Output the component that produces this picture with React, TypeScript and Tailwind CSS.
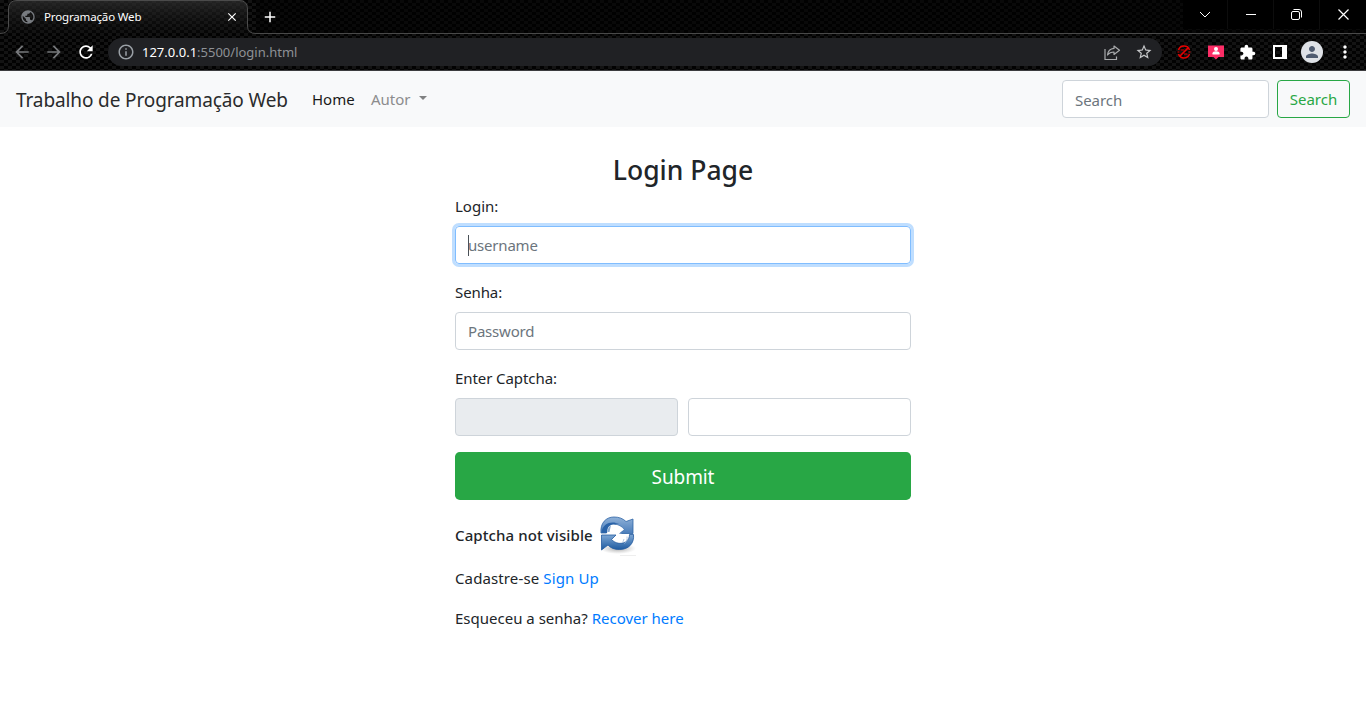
import React from "react";
import {
  MdArrowBack, MdArrowForward, MdRefresh, MdInfoOutline, MdClose, MdAdd,
  MdExtension, MdStarBorder, MdPublic, MdMoreVert, MdPerson,
} from "react-icons/md";

const weave =
  "bg-[#040404] bg-[repeating-conic-gradient(#020202_0_25%,#131313_0_50%)] bg-[length:8px_6px]";

function ShareIcon() {
  return (
    <svg width="18" height="18" viewBox="0 0 18 18" fill="none" stroke="#a9abad" strokeWidth="1.2">
      <path d="M2 6v10.500h11.500v-3" />
      <path d="M11 3l5.500 4.200L11 11.400V9C8 9 6 10 4.500 12 4.900 8.500 7 5.800 11 5.400z" strokeLinejoin="round" />
    </svg>
  );
}

function BlockedIcon() {
  return (
    <svg width="14" height="14" viewBox="0 0 14 14" fill="none" stroke="#e80000">
      <path d="M1.500 5A5.800 5.800 0 0 1 12.500 5M12.500 9A5.800 5.800 0 0 1 1.500 9" strokeWidth="1.500" />
      <path d="M3 11L11 3" strokeWidth="1.700" />
      <path d="M3.500 5h3.500M7 9h3.500M.5 7h2M11.500 7h2" strokeWidth="1" />
    </svg>
  );
}

function BadgeIcon() {
  return (
    <svg width="16" height="15" viewBox="0 0 16 15">
      <path d="M0 .5h16v11.500h-5.500L8 14.500 5.500 12H0z" fill="#fc2d66" />
      <circle cx="8" cy="4" r="2" fill="#fff" />
      <path d="M4.500 9.500V8.200c0-1.300 1.500-2 3.500-2s3.500.7 3.500 2v1.300z" fill="#fff" />
    </svg>
  );
}

function RefreshArrows() {
  return (
    <svg width="40" height="44" viewBox="0 0 40 44">
      <defs>
        <linearGradient id="top" x1="0" y1="0" x2="0" y2="1">
          <stop offset="0" stopColor="#8fb1d8" />
          <stop offset="1" stopColor="#4a7dba" />
        </linearGradient>
        <linearGradient id="bottom" x1="0" y1="0" x2="0" y2="1">
          <stop offset="0" stopColor="#7fa8d5" />
          <stop offset="1" stopColor="#1c599f" />
        </linearGradient>
        <radialGradient id="shade">
          <stop offset="0" stopColor="#777" stopOpacity=".65" />
          <stop offset="1" stopColor="#999" stopOpacity="0" />
        </radialGradient>
      </defs>
      <ellipse cx="20" cy="35.500" rx="18" ry="5.500" fill="url(#shade)" />
      <path d="M3 20C2 10 8 4 16 4c5 0 9 1.500 12 4.500L35 6v14.500H21l5-4C22 11 14 10 10.500 13L8.500 20z" fill="url(#top)" stroke="#2f65a6" strokeWidth=".8" />
      <path d="M3.500 19C5 10 14 7.500 21 11 14 10 10.500 13 9 20H4z" fill="#2a63a8" />
      <path d="M9.500 19.500C9 16 10 13.500 13 12 18 11 23 13 26 16.500L21 20.500 31 22C33 28 27 32 20 30L14 27 19 21.500z" fill="#fff" />
      <path d="M9.500 19c0-3 1-5 3.500-7l-1.500 7" fill="#88a8cf" />
      <path d="M35.500 21.500c1 9-5 15-14 15-5 0-9-1.500-11.500-4.500L3.500 37V22H18l-4.500 4.500c4 4 9 5 14 2.500 3-2 4-4.500 4-7.500z" fill="url(#bottom)" stroke="#245a9e" strokeWidth=".8" />
      <path d="M29 23.500c.5 3-.5 5-2.500 7M26 26l-1.500 4" stroke="#a3bddb" fill="none" strokeWidth=".8" />
      <path d="M22 42.500h16" stroke="#eee" />
    </svg>
  );
}

function Tab() {
  return (
    <div className="relative h-[34px] w-[256px] shrink-0">
      <svg className="absolute inset-0" width="256" height="34" fill="none">
        <defs>
          <linearGradient id="tabFill" x1="0" y1="0" x2="0" y2="1">
            <stop offset="0" stopColor="#303030" stopOpacity=".75" />
            <stop offset="1" stopColor="#101010" stopOpacity=".2" />
          </linearGradient>
        </defs>
        <path
          d="M0 33.500Q8.500 33.500 8.500 26V9Q8.500.5 17 .5H239Q247.500.5 247.500 9V26Q247.500 33.500 256 33.500"
          fill="url(#tabFill)"
          stroke="#4b4b4b"
        />
      </svg>
      <div className="relative flex h-[33px] items-center pl-[20px] pr-[17px]">
        <MdPublic size={16} color="#777b80" />
        <span className="ml-[8px] flex-1 whitespace-nowrap text-[11.5px] tracking-[-0.15px] text-white">Programação Web</span>
        <MdClose size={14} color="#fff" />
      </div>
    </div>
  );
}

function Browser() {
  return (
    <header className={`h-[71px] border-b border-[#3c3c3e] ${weave}`}>
      <div className="flex h-[34px]">
        <Tab />
        <div className="flex flex-1 border-b border-[#494949] bg-black/50">
          <div className="ml-[5px] flex flex-1 items-center"><MdAdd size={18} color="#fff" /></div>
          <div className="flex h-[29px] bg-black">
            <div className="flex w-[45px] items-center justify-center border-r border-[#0d0d0d]">
              <svg width="12" height="8" viewBox="0 0 12 8" fill="none" stroke="#fff"><path d="M1 1l5 5 5-5" /></svg>
            </div>
            <div className="flex w-[46px] items-center justify-center border-r border-[#0d0d0d]"><div className="h-px w-[10px] bg-white" /></div>
            <div className="flex w-[46px] items-center justify-center border-r border-[#0d0d0d]">
              <svg width="11" height="11" viewBox="0 0 11 11" fill="none" stroke="#fff"><rect x=".5" y="2.500" width="8" height="8" rx="1.500" /><path d="M2.500.5H8a2.500 2.500 0 0 1 2.500 2.500v5.500" /></svg>
            </div>
            <div className="flex w-[46px] items-center justify-center">
              <svg width="11" height="11" viewBox="0 0 11 11" stroke="#fff" strokeWidth="1.200"><path d="M.5.5l10 10M10.500.5l-10 10" /></svg>
            </div>
          </div>
        </div>
      </div>
      <div className="flex h-9 items-center pl-3">
        <MdArrowBack size={20} color="#77797c" />
        <MdArrowForward size={20} color="#77797c" className="ml-3" />
        <MdRefresh size={20} color="#fff" className="ml-3" />
        <div className="ml-[12px] flex h-7 w-[1054px] items-center rounded-full bg-[#202124] pl-[9px] pr-[9px]">
          <MdInfoOutline size={18} color="#9aa0a6" />
          <span className="ml-[7px] flex-1 pt-px text-[13px] text-[#8e9196]"><span className="text-white">127.0.0.1</span>:5500/login.html</span>
          <ShareIcon />
          <MdStarBorder size={18} color="#c5c7c9" className="ml-[14px]" />
        </div>
        <div className="ml-[15px]"><BlockedIcon /></div>
        <div className="ml-[17px]"><BadgeIcon /></div>
        <MdExtension size={17} color="#fff" className="ml-[15px]" />
        <svg width="14" height="14" className="ml-[17px]"><path d="M0 0h14v14H0zM2 2v10h7V2z" fill="#fff" fillRule="evenodd" /></svg>
        <div className="ml-[14px] flex size-[22px] items-center justify-center rounded-full bg-[#dee1e6]"><MdPerson size={18} color="#4f5b70" /></div>
        <MdMoreVert size={20} color="#fff" className="ml-[12px]" />
      </div>
    </header>
  );
}

function Navbar() {
  return (
    <nav className="flex h-14 items-center bg-[#f8f9fa] px-4">
      <span className="w-[272px] whitespace-nowrap pt-[2px] text-[19px] tracking-[-0.12px] text-[#2a2b2c]">Trabalho de Programação Web</span>
      <a className="ml-6 w-[59px] text-[15px] text-[#191919]">Home</a>
      <a className="w-[40px] text-[15px] text-[#8c8c8d]">Autor</a>
      <span className="ml-[8px] -mt-[3px] border-x-[4.8px] border-t-[4.8px] border-x-transparent border-t-[#808182]" />
      <div className="ml-auto flex h-[38px] w-[207px] items-center rounded border border-[#ced4da] bg-white px-3 pt-[2px] text-[15px] tracking-[-0.05px] text-[#6c757d]">Search</div>
      <button className="ml-2 h-[38px] w-[73px] rounded border border-[#28a745] text-[15px] text-[#28a745]">Search</button>
    </nav>
  );
}

const field = "flex h-[38px] items-center rounded border px-3 tracking-[-0.2px] text-[#6c757d]";

export default function App() {
  return (
    <div className="h-[720px] w-[1366px] overflow-hidden bg-white font-['Noto_Sans',sans-serif]">
      <Browser />
      <Navbar />
      <main className="mx-auto w-[456px] pt-[26px] text-[15px] leading-6 text-[#212529]">
        <h1 className="mb-[5px] text-center text-[26.5px] font-medium leading-[34px]">Login Page</h1>
        <label className="block pb-[8px] pt-[2px]">Login:</label>
        <div className={`${field} border-[#80bdff] shadow-[0_0_0_3px_#bfdeff]`}><span className="-mr-px h-[21px] w-px bg-[#495057]" />username</div>
        <label className="mt-4 block pb-2 tracking-[-0.1px]">Senha:</label>
        <div className={`${field} border-[#ced4da]`}>Password</div>
        <label className="mt-4 block pb-2 tracking-[-0.08px]">Enter Captcha:</label>
        <div className="flex gap-[10px]">
          <div className={`${field} flex-1 border-[#ced4da] bg-[#e9ecef]`} />
          <div className={`${field} flex-1 border-[#ced4da]`} />
        </div>
        <button className="mt-4 block h-12 w-full rounded-[4.8px] bg-[#28a745] pt-[2px] text-[19px] tracking-[-0.1px] text-white">Submit</button>
        <div className="mt-[13px] flex h-11 items-center"><span className="-mt-[1px] w-[143px] whitespace-nowrap font-medium tracking-[0.1px]">Captcha not visible</span><RefreshArrows /></div>
        <p className="mt-[9px] tracking-[0.12px]">Cadastre-se <a className="text-[#007bff]">Sign Up</a></p>
        <p className="mt-4">Esqueceu a senha? <a className="text-[#007bff]">Recover here</a></p>
      </main>
    </div>
  );
}
